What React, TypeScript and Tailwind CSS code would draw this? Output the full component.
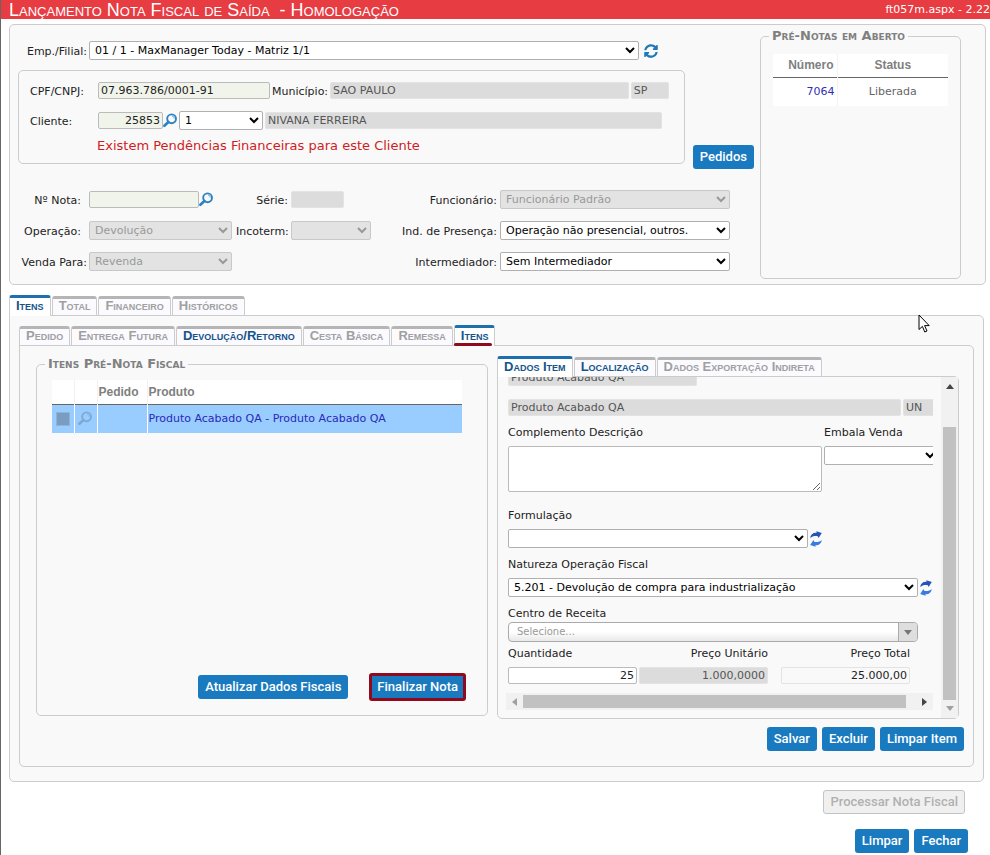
import type { ReactNode } from "react";
import clsx from "clsx";
import { FaSyncAlt } from "react-icons/fa";

const field = "h-[17px] rounded-[2px] border px-[2px] text-[11px]";
const editable = "border-[#bbb] bg-white";
const required = "border-[#bbb] bg-[#f1f4ea]";
const locked = "border-[#e3e3e3] bg-[#dcdcdc] text-[#555]";

const SearchIcon = ({ className }: { className?: string }) => (
  <svg viewBox="0 0 16 16" className={clsx("h-4 w-4 shrink-0", className)} fill="none" aria-hidden="true">
    <circle cx="8.6" cy="5.8" r="4.4" stroke="currentColor" strokeWidth="1.9" />
    <path d="M5.4 9L1.4 12.8" stroke="currentColor" strokeWidth="2.6" strokeLinecap="round" />
    <path d="M9 3.2c1.4 0 2.2 1 2.2 2.4" stroke="currentColor" strokeWidth="1" opacity="0.7" />
  </svg>
);

const ReloadIcon = () => (
  <svg viewBox="0 0 14 16" className="h-4 w-[14px]" aria-hidden="true">
    <path fill="#2554b8" d="M1.2 7C1.6 3.4 4.2 1.4 7.6 1.8L7.4 0.2L12.8 2L9.6 7L8.8 5.2C6 4.6 3.4 5 1.2 7Z" />
    <path fill="#3a7be0" d="M12.8 9C12.4 12.6 9.8 14.6 6.4 14.2L6.6 15.8L1.2 14L4.4 9L5.2 10.8C8 11.4 10.6 11 12.8 9Z" />
  </svg>
);

type SelectProps = { id: string; label?: string; value?: string; disabled?: boolean; className?: string };

const Select = ({ id, label, value = "", disabled, className }: SelectProps) => (
  <select
    id={id}
    aria-label={label}
    disabled={disabled}
    className={clsx(
      "h-[19px] rounded-[2px] border pl-px text-[11px]",
      disabled ? "border-[#c8c8c8] bg-[#e3e3e3] text-[#999]" : "border-[#b0b0b0] bg-white text-black",
      className
    )}
  >
    <option>{value}</option>
  </select>
);

const Label = ({ htmlFor, className, children }: { htmlFor: string; className?: string; children: ReactNode }) => (
  <label htmlFor={htmlFor} className={clsx("shrink-0 whitespace-nowrap pt-[2px]", className)}>
    {children}
  </label>
);

const Button = ({ className = "px-[7px]", children }: { className?: string; children: ReactNode }) => (
  <button
    type="button"
    className={clsx(
      "min-h-6 shrink-0 whitespace-nowrap rounded-[3px] bg-[#1a7abf] font-[Roboto,Arial,sans-serif] text-[13px] font-medium text-white",
      className
    )}
  >
    {children}
  </button>
);

type Tab = { name: string; state?: "active" | "enabled"; marked?: boolean };

const Tabs = ({ items }: { items: Tab[] }) => (
  <div role="tablist" className="relative -mb-px flex items-end gap-px">
    {items.map((tab) => (
      <button
        key={tab.name}
        type="button"
        role="tab"
        aria-selected={tab.state === "active"}
        className={clsx(
          "relative whitespace-nowrap rounded-t-[3px] border-x border-t-[3px] px-[6px] pb-[2px] font-['Liberation_Sans',Arial,sans-serif] text-[13px] leading-[14px] font-bold [font-variant:small-caps]",
          tab.state === "active" && "h-[21px] border-x-[#ccc] border-t-[#1d6fae] bg-white text-[#15548a]",
          tab.state === "enabled" && "h-5 border-b border-x-[#ccc] border-t-[#b5b5b5] border-b-[#ccc] bg-[#fafaff] text-[#15548a]",
          !tab.state && "h-5 border-b border-x-[#ccc] border-t-[#b5b5b5] border-b-[#ccc] bg-[#fafaff] text-[#a0a0a0]"
        )}
      >
        {tab.name}
        {tab.marked && <span className="absolute -left-px bottom-0 h-[3px] w-[38px] rounded-full bg-[#8f0a1e]" />}
      </button>
    ))}
  </div>
);

const Group = ({ title, className, children }: { title: string; className?: string; children: ReactNode }) => (
  <fieldset className={clsx("rounded-[5px] border border-[#ccc]", className)}>
    <legend className="ml-2 px-[3px] text-[13px] leading-[16px] font-bold text-[#808080] [font-variant:small-caps]">{title}</legend>
    {children}
  </fieldset>
);

const Header = () => (
  <header className="flex h-[19px] items-center justify-between overflow-hidden bg-[#e73c42] pl-2 font-['Liberation_Sans',Arial,sans-serif] text-white">
    <h1 className="whitespace-pre text-[18px] leading-[18px] [font-variant:small-caps]">Lançamento Nota Fiscal de Saída  - Homologação</h1>
    <span className="font-['DejaVu_Sans',Verdana,sans-serif] text-[11px]">ft057m.aspx - 2.22</span>
  </header>
);

const Invoice = () => (
  <section className="mr-1 ml-2 mt-[5px] flex rounded-[5px] border border-[#ccc] bg-[#f9f9f9] pr-6 pb-[5px]">
    <div className="min-w-0 flex-1 pt-4 pb-2">
      <div className="flex items-center">
        <Label htmlFor="emp" className="w-[79px] pr-[2px] text-right">Emp./Filial:</Label>
        <Select id="emp" value="01 / 1 - MaxManager Today - Matriz 1/1" className="min-w-0 flex-1" />
        <button type="button" aria-label="Atualizar" className="mr-[102px] ml-[5px] text-[14px] text-[#1f78b8]">
          <FaSyncAlt />
        </button>
      </div>

      <div className="mt-[10px] mr-[6px] flex items-end gap-2">
        <div className="ml-2 flex h-[94px] min-w-0 flex-1 flex-col rounded-[5px] border border-[#ccc] pt-[11px] pl-[11px]">
          <div className="flex h-[17px] items-center">
            <Label htmlFor="cpf" className="w-[68px]">CPF/CNPJ:</Label>
            <input id="cpf" defaultValue="07.963.786/0001-91" className={clsx(field, required, "w-[172px]")} />
            <Label htmlFor="cidade" className="mx-[2px]">Município:</Label>
            <input id="cidade" readOnly value="SAO PAULO" className={clsx(field, locked, "min-w-0 flex-1")} />
            <input aria-label="UF" readOnly value="SP" className={clsx(field, locked, "mr-[15px] ml-[2px] w-[38px]")} />
          </div>
          <div className="mt-3 flex h-[19px] items-center">
            <Label htmlFor="cliente" className="w-[68px]">Cliente:</Label>
            <input id="cliente" defaultValue="25853" className={clsx(field, required, "w-[65px] text-right")} />
            <SearchIcon className="text-[#2b82c4]" />
            <Select id="loja" label="Loja" value="1" className="w-[84px] shrink-0" />
            <input aria-label="Nome do cliente" readOnly value="NIVANA FERREIRA" className={clsx(field, locked, "mr-[22px] ml-[2px] min-w-0 flex-1")} />
          </div>
          <p className="mt-[6px] ml-[67px] text-[13px] leading-[20px] text-[#d01c1f]">Existem Pendências Financeiras para este Cliente</p>
        </div>
        <Button className="-mb-[5px] px-[7px]">Pedidos</Button>
      </div>

      <div className="mt-[26px] mr-[30px] grid grid-cols-[79px_147px_55px_minmax(80px,1fr)_129px_230px] items-center gap-y-3">
        <Label htmlFor="nota" className="pr-2 text-right">Nº Nota:</Label>
        <div className="flex h-[19px] items-center">
          <input id="nota" className={clsx(field, required, "w-[110px]")} />
          <SearchIcon className="text-[#2b82c4]" />
        </div>
        <Label htmlFor="serie" className="pr-[3px] text-right">Série:</Label>
        <input id="serie" readOnly className={clsx(field, locked, "w-[53px]")} />
        <Label htmlFor="funcionario" className="pr-[3px] text-right">Funcionário:</Label>
        <Select id="funcionario" value="Funcionário Padrão" disabled />

        <Label htmlFor="operacao" className="pr-2 text-right">Operação:</Label>
        <Select id="operacao" value="Devolução" disabled className="w-[143px]" />
        <Label htmlFor="incoterm" className="pr-[3px] text-right">Incoterm:</Label>
        <Select id="incoterm" disabled className="w-20" />
        <Label htmlFor="presenca" className="pr-[3px] text-right">Ind. de Presença:</Label>
        <Select id="presenca" value="Operação não presencial, outros." />

        <Label htmlFor="venda" className="pr-[2px] text-right">Venda Para:</Label>
        <Select id="venda" value="Revenda" disabled className="w-[143px]" />
        <Label htmlFor="intermediador" className="col-start-5 pr-[3px] text-right">Intermediador:</Label>
        <Select id="intermediador" value="Sem Intermediador" />
      </div>
    </div>

    <Group title="Pré-Notas em Aberto" className="mt-[3px] w-[201px] shrink-0">
      <div className="px-3 pt-[10px]">
        <table className="w-full border-collapse bg-white">
          <thead className="font-['Liberation_Sans',Arial,sans-serif] text-[12px] text-[#808080]">
            <tr className="h-[23px] border-b border-[#666]">
              <th scope="col" className="w-16 border-r border-r-[#f3f3f3] pr-[3px] text-right">Número</th>
              <th scope="col">Status</th>
            </tr>
          </thead>
          <tbody>
            <tr className="h-[29px]">
              <td className="border-r border-[#f3f3f3] pr-[2px] text-right"><a href="#7064" className="text-[#3030b0]">7064</a></td>
              <td className="text-center text-[#666]">Liberada</td>
            </tr>
          </tbody>
        </table>
      </div>
    </Group>
  </section>
);

const PreInvoiceItems = () => (
  <Group title="Itens Pré-Nota Fiscal" className="w-[452px] shrink-0">
    <div className="px-[15px] pt-2 pb-[14px]">
      <table className="w-[410px] border-collapse">
        <thead className="bg-white font-['Liberation_Sans',Arial,sans-serif] text-[12px] text-[#808080]">
          <tr className="h-6 border-b border-[#666] text-left">
            <th className="w-[22px] border-r border-r-[#f1f1f1]" />
            <th className="w-[23px] border-r border-r-[#f1f1f1]" />
            <th scope="col" className="w-[50px] border-r border-r-[#f1f1f1] pl-px">Pedido</th>
            <th scope="col" className="pl-px">Produto</th>
          </tr>
        </thead>
        <tbody className="bg-[#99ccff]">
          <tr className="h-[29px]">
            <td className="border-r border-white">
              <input type="checkbox" aria-label="Selecionar item" className="mx-auto block h-[14px] w-[14px] appearance-none border border-[#8fb3d6] bg-[#7a9cc0]" />
            </td>
            <td className="border-r border-white"><SearchIcon className="mx-auto text-[#7fa9d2]" /></td>
            <td className="border-r border-white" />
            <td className="pl-px"><a href="#item" className="text-[#2a2ab8]">Produto Acabado QA - Produto Acabado QA</a></td>
          </tr>
        </tbody>
      </table>
      <div className="mt-[240px] flex items-center justify-end gap-[21px] pr-[6px]">
        <Button>Atualizar Dados Fiscais</Button>
        <Button className="h-7 border-[3px] border-[#8f0a1e] px-[5px]">Finalizar Nota</Button>
      </div>
    </div>
  </Group>
);

const ItemForm = () => (
  <div className="flex h-[343px] rounded-b-[5px] rounded-tr-[5px] border border-[#ccc]">
    <div className="min-w-0 flex-1 overflow-hidden pr-2 pl-2">
      <div className="h-[316px] overflow-hidden pl-[2px]">
        <input aria-label="Produto" readOnly value="Produto Acabado QA" className={clsx(field, locked, "-mt-2 block w-[189px]")} />
        <div className="mt-[13px] flex gap-[2px] overflow-hidden">
          <input aria-label="Descrição" readOnly value="Produto Acabado QA" className={clsx(field, locked, "w-[393px] shrink-0")} />
          <input aria-label="Unidade" readOnly value="UN" className={clsx(field, locked, "w-[38px] shrink-0")} />
        </div>
        <div className="mt-[7px] flex gap-[2px] leading-[20px]">
          <label htmlFor="complemento" className="w-[314px] shrink-0">Complemento Descrição</label>
          <label htmlFor="embala">Embala Venda</label>
        </div>
        <div className="mt-[3px] flex gap-[2px] overflow-hidden">
          <textarea id="complemento" className={clsx(editable, "h-[46px] w-[314px] shrink-0 rounded-[2px] border")} />
          <Select id="embala" className="w-[115px] shrink-0" />
        </div>
        <label htmlFor="formulacao" className="mt-[14px] block leading-[20px]">Formulação</label>
        <div className="mt-[3px] flex items-center gap-px">
          <Select id="formulacao" className="w-[300px] shrink-0" />
          <button type="button" aria-label="Atualizar formulação"><ReloadIcon /></button>
        </div>
        <label htmlFor="natureza" className="mt-[7px] block leading-[20px]">Natureza Operação Fiscal</label>
        <div className="mt-[3px] flex items-center gap-px">
          <Select id="natureza" value="5.201 - Devolução de compra para industrialização" className="w-[410px] shrink-0" />
          <button type="button" aria-label="Atualizar natureza"><ReloadIcon /></button>
        </div>
        <label htmlFor="centro" className="mt-[9px] block leading-[16px]">Centro de Receita</label>
        <div className="relative w-[410px]">
          <select id="centro" className="block h-5 w-full appearance-none rounded-[4px] border border-[#aaa] bg-linear-to-b from-white from-50% to-[#e8e8e8] pl-2 text-[10px] text-[#999]">
            <option>Selecione...</option>
          </select>
          <span className="pointer-events-none absolute inset-y-px right-px flex w-[19px] items-center justify-center rounded-r-[3px] border-l border-[#aaa] bg-[#dedede]">
            <svg viewBox="0 0 8 5" className="h-[5px] w-2" fill="#777" aria-hidden="true"><path d="M0 0H8L4 5Z" /></svg>
          </span>
        </div>
        <div className="mt-[3px] flex w-[402px] text-right leading-[18px]">
          <label htmlFor="quantidade" className="w-[131px] text-left">Quantidade</label>
          <label htmlFor="unitario" className="w-[129px]">Preço Unitário</label>
          <label htmlFor="total" className="flex-1">Preço Total</label>
        </div>
        <div className="mt-1 flex gap-[2px]">
          <input id="quantidade" defaultValue="25" className={clsx(field, editable, "w-[129px] text-right")} />
          <input id="unitario" readOnly value="1.000,0000" className={clsx(field, locked, "w-[129px] text-right")} />
          <input id="total" defaultValue="25.000,00" className={clsx(field, "ml-[11px] w-[129px] border-[#e3e3e3] bg-[#f9f9f9] text-right")} />
        </div>
      </div>
      <div className="flex h-[17px] items-center bg-[#f1f1f1] px-[6px]">
        <svg viewBox="0 0 5 8" className="h-2 w-[5px]" fill="#a0a0a0" aria-hidden="true"><path d="M5 0V8L0 4Z" /></svg>
        <span className="mr-4 ml-[6px] h-[13px] flex-1 bg-[#c1c1c1]" />
        <svg viewBox="0 0 5 8" className="h-2 w-[5px]" fill="#444" aria-hidden="true"><path d="M0 0V8L5 4Z" /></svg>
      </div>
    </div>
    <div className="flex w-[17px] shrink-0 flex-col items-center bg-[#f1f1f1] py-[7px]">
      <svg viewBox="0 0 8 5" className="h-[5px] w-2" fill="#444" aria-hidden="true"><path d="M0 5H8L4 0Z" /></svg>
      <span className="mt-[38px] mb-[6px] w-[13px] flex-1 bg-[#c1c1c1]" />
      <svg viewBox="0 0 8 5" className="h-[5px] w-2" fill="#a0a0a0" aria-hidden="true"><path d="M0 0H8L4 5Z" /></svg>
    </div>
  </div>
);

const Items = () => (
  <section className="mr-[6px] ml-2 mt-[10px]">
    <Tabs items={[{ name: "Itens", state: "active" }, { name: "Total" }, { name: "Financeiro" }, { name: "Históricos" }]} />
    <div className="rounded-b-[5px] rounded-tr-[5px] border border-[#ccc] bg-[#f9f9f9] px-[9px] pt-[9px] pb-[14px]">
      <Tabs
        items={[
          { name: "Pedido" },
          { name: "Entrega Futura" },
          { name: "Devolução/Retorno", state: "enabled" },
          { name: "Cesta Básica" },
          { name: "Remessa" },
          { name: "Itens", state: "active", marked: true },
        ]}
      />
      <div className="rounded-b-[5px] rounded-tr-[5px] border border-[#ccc] pt-[10px] pr-[9px] pb-[15px] pl-4">
        <div className="flex items-start gap-[9px]">
          <PreInvoiceItems />
          <div className="mr-[5px] min-w-0 flex-1">
            <Tabs
              items={[
                { name: "Dados Item", state: "active" },
                { name: "Localização", state: "enabled" },
                { name: "Dados Exportação Indireta" },
              ]}
            />
            <ItemForm />
          </div>
        </div>
        <div className="mt-2 flex justify-end gap-[5px]">
          <Button>Salvar</Button>
          <Button>Excluir</Button>
          <Button>Limpar Item</Button>
        </div>
      </div>
    </div>
  </section>
);

export default function App() {
  return (
    <div className="min-h-screen overflow-hidden border-l border-[#666] bg-white font-['DejaVu_Sans',Verdana,sans-serif] text-[11px] leading-[14px] text-[#222]">
      <Header />
      <main>
        <Invoice />
        <Items />
        <footer className="flex flex-col items-end gap-[15px] pt-2 pr-[22px]">
          <button
            type="button"
            disabled
            className="mr-[3px] h-6 rounded-[3px] border border-[#c4c4c4] bg-[#f0f0f0] px-[6px] font-[Roboto,Arial,sans-serif] text-[13px] font-medium text-[#b0b0b0]"
          >
            Processar Nota Fiscal
          </button>
          <div className="flex gap-[5px]">
            <Button>Limpar</Button>
            <Button>Fechar</Button>
          </div>
        </footer>
      </main>
      {/* Mouse pointer */}
      <svg viewBox="0 0 12 19" className="pointer-events-none absolute top-[314px] left-[918px] h-[19px] w-3" aria-hidden="true">
        <path d="M1 1V15.5L4.4 12.4L6.8 18L9 17L6.6 11.6H11.2Z" fill="white" stroke="black" />
      </svg>
    </div>
  );
}
